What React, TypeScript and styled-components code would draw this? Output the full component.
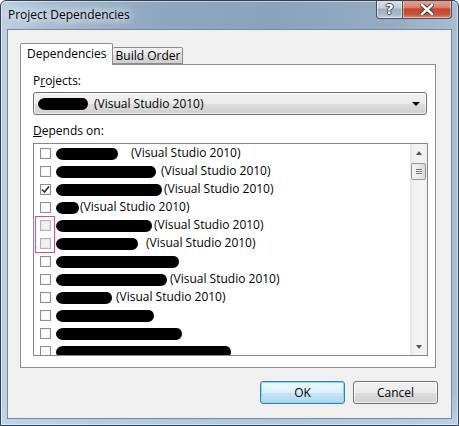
import React from 'react';
import styled, {createGlobalStyle} from 'styled-components';

const GlobalStyle = createGlobalStyle`
	html, body {
		margin: 0;
		padding: 0;
		background: #ffffff;
	}
	body {
		font-family: "Open Sans", "Noto Sans", sans-serif;
		font-size: 12px;
		color: #000;
	}
`;

const Window = styled.div`
	width: 459px;
	height: 426px;
	box-sizing: border-box;
	display: flex;
	flex-direction: column;
	border: 1px solid #37424f;
	border-radius: 6px 6px 0 0;
	padding: 0 6px 6px 6px;
	background:
		linear-gradient(180deg, rgba(255, 255, 255, 0) 92%, rgba(190, 215, 240, 0.8) 100%),
		linear-gradient(90deg, #bdd0e4 0%, #a4b9cf 12%, #8ea6c0 35%, #8aa2bc 60%, #94abc3 85%, #a9bdd2 100%);
	box-shadow: inset 0 0 0 1px rgba(255, 255, 255, 0.45);
	overflow: hidden;
`;

const TitleBar = styled.div`
	height: 28px;
	display: flex;
	align-items: flex-start;
	justify-content: space-between;
`;

const Title = styled.div`
	padding: 6px 0 0 1px;
	font-size: 12px;
	line-height: 16px;
	color: #000;
	text-shadow: 0 0 6px #e8eef5, 0 0 10px #e8eef5, 0 0 14px #e8eef5;
`;

const CaptionButtons = styled.div`
	display: flex;
	margin-top: -1px;
`;

const CaptionButton = styled.div<{$close?: boolean}>`
	width: ${p => (p.$close ? 49 : 27)}px;
	height: 19px;
	box-sizing: border-box;
	display: flex;
	align-items: center;
	justify-content: center;
	border: 1px solid #48525e;
	border-top: none;
	border-radius: ${p => (p.$close ? '0 0 4px 0' : '0 0 0 4px')};
	border-left: ${p => (p.$close ? 'none' : '1px solid #48525e')};
	background: ${p =>
		p.$close
			? 'linear-gradient(180deg, #e8a493 0%, #d88770 40%, #c6452f 50%, #c9533d 80%, #dc8e78 100%)'
			: 'linear-gradient(180deg, #dbe3ec 0%, #c3cfdb 45%, #9fb0c2 50%, #a9b9c9 80%, #c8d4e0 100%)'};
	box-shadow: inset 0 0 0 1px rgba(255, 255, 255, 0.45);
	color: #fff;
	font-family: "DejaVu Sans", sans-serif;
	font-weight: bold;
	font-size: 14px;
	text-shadow: -1px 0 #3b4550, 1px 0 #3b4550, 0 -1px #3b4550, 0 1px #3b4550;
`;

const Client = styled.div`
	flex: 1;
	display: flex;
	flex-direction: column;
	background: #f0f0f0;
	border: 1px solid #7a8899;
	padding: 13px 13px 0 12px;
`;

const TabStrip = styled.div`
	height: 21px;
	display: flex;
	align-items: flex-end;
	position: relative;
	z-index: 1;
`;

const Tab = styled.div<{$active?: boolean}>`
	box-sizing: border-box;
	height: ${p => (p.$active ? 22 : 17)}px;
	margin-bottom: ${p => (p.$active ? -1 : 0)}px;
	padding: ${p => (p.$active ? '2px 5px 0 6px' : '0 2px 0 3px')};
	border: 1px solid #898c95;
	border-bottom: ${p => (p.$active ? 'none' : '1px solid #898c95')};
	border-left: ${p => (p.$active ? '1px solid #898c95' : 'none')};
	border-radius: 2px 2px 0 0;
	background: ${p =>
		p.$active ? '#ffffff' : 'linear-gradient(180deg, #f2f2f2 0%, #ebebeb 50%, #dddddd 50%, #cfcfcf 100%)'};
	line-height: 16px;
	white-space: nowrap;
`;

const TabPanel = styled.div`
	height: 304px;
	box-sizing: border-box;
	margin-right: 2px;
	display: flex;
	flex-direction: column;
	background: #ffffff;
	border: 1px solid #898c95;
	padding: 8px 8px 0 12px;
`;

const FieldLabel = styled.div`
	line-height: 16px;
	& u {
		text-decoration: underline;
	}
`;

const Combo = styled.div`
	height: 23px;
	box-sizing: border-box;
	margin-top: 3px;
	display: flex;
	align-items: center;
	padding: 0 6px 0 4px;
	border: 1px solid #707070;
	border-radius: 3px;
	background: linear-gradient(180deg, #f2f2f2 0%, #ebebeb 50%, #dddddd 50%, #cfcfcf 100%);
	box-shadow: inset 0 0 0 1px rgba(255, 255, 255, 0.6);
`;

const ComboText = styled.div`
	flex: 1;
	display: flex;
	align-items: center;
	white-space: nowrap;
`;

const DropArrow = styled.div`
	width: 0;
	height: 0;
	border-left: 4px solid transparent;
	border-right: 4px solid transparent;
	border-top: 4px solid #000;
`;

const DependsLabel = styled(FieldLabel)`
	margin-top: 8px;
`;

const ListBox = styled.div`
	margin-top: 4px;
	margin-right: -1px;
	height: 213px;
	box-sizing: border-box;
	display: flex;
	border: 1px solid #828790;
	background: #ffffff;
`;

const Rows = styled.div`
	flex: 1;
	position: relative;
	overflow: hidden;
`;

const Row = styled.div`
	height: 18px;
	display: flex;
	align-items: center;
	padding-left: 6px;
	white-space: nowrap;
`;

const Check = styled.div<{$dim?: boolean}>`
	width: 11px;
	height: 11px;
	box-sizing: border-box;
	flex: none;
	display: flex;
	align-items: center;
	justify-content: center;
	margin-right: 5px;
	border: 1px solid ${p => (p.$dim ? '#b4b4b4' : '#8e8f8f')};
	background: ${p => (p.$dim ? '#f0f0f0' : '#ffffff')};
	box-shadow: inset 0 0 0 1px ${p => (p.$dim ? '#e6e6e6' : '#f4f4f4')};
`;

const Redaction = styled.span`
	display: inline-block;
	height: 12px;
	flex: none;
	background: #000;
	border-radius: 7px 5px 6px 7px / 6px 6px 6px 6px;
	margin-top: 1px;
`;

const Suffix = styled.span`
	line-height: 16px;
`;

const FocusMark = styled.div`
	position: absolute;
	left: 1px;
	top: 72px;
	width: 20px;
	height: 37px;
	box-sizing: border-box;
	border: 1px solid #e2448f;
`;

const ScrollBar = styled.div`
	width: 17px;
	display: flex;
	flex-direction: column;
	background: linear-gradient(90deg, #e3e3e3 0%, #f0f0f0 20%, #f4f4f4 80%, #ebebeb 100%);
`;

const ArrowButton = styled.div`
	height: 17px;
	display: flex;
	align-items: center;
	justify-content: center;
`;

const ArrowUp = styled.div`
	width: 0;
	height: 0;
	border-left: 3px solid transparent;
	border-right: 3px solid transparent;
	border-bottom: 4px solid #545454;
`;

const ArrowDown = styled(ArrowUp)`
	border-bottom: none;
	border-top: 4px solid #545454;
`;

const Track = styled.div`
	flex: 1;
	padding-top: 2px;
`;

const Thumb = styled.div`
	height: 17px;
	margin: 0 1px;
	box-sizing: border-box;
	display: flex;
	flex-direction: column;
	align-items: center;
	justify-content: center;
	gap: 1px;
	border: 1px solid #979797;
	border-radius: 2px;
	background: linear-gradient(90deg, #f5f5f5 0%, #e9e9e9 50%, #d9d9d9 100%);
`;

const Grip = styled.div`
	width: 6px;
	height: 1px;
	background: #6f6f6f;
	box-shadow: 0 1px #ffffff;
`;

const ButtonRow = styled.div`
	margin-top: 13px;
	display: flex;
	justify-content: flex-end;
	gap: 8px;
`;

const DialogButton = styled.div<{$default?: boolean}>`
	width: 85px;
	height: 23px;
	box-sizing: border-box;
	display: flex;
	align-items: center;
	justify-content: center;
	border: 1px solid ${p => (p.$default ? '#3c7fb1' : '#707070')};
	border-radius: 3px;
	background: ${p =>
		p.$default
			? 'linear-gradient(180deg, #edf8fe 0%, #dcf1fc 50%, #c4e6f9 50%, #aed8f2 100%)'
			: 'linear-gradient(180deg, #f2f2f2 0%, #ebebeb 50%, #dddddd 50%, #cfcfcf 100%)'};
	box-shadow: inset 0 0 0 1px ${p => (p.$default ? '#8fd2f6' : 'rgba(255, 255, 255, 0.7)')};
	line-height: 16px;
`;

type Dep = {w: number; gap: number; suffix?: string; checked?: boolean; dim?: boolean};

const deps: Dep[] = [
	{w: 62, gap: 13, suffix: '(Visual Studio 2010)'},
	{w: 100, gap: 5, suffix: '(Visual Studio 2010)'},
	{w: 106, gap: 2, suffix: '(Visual Studio 2010)', checked: true},
	{w: 23, gap: 1, suffix: '(Visual Studio 2010)'},
	{w: 96, gap: 2, suffix: '(Visual Studio 2010)', dim: true},
	{w: 82, gap: 8, suffix: '(Visual Studio 2010)', dim: true},
	{w: 123, gap: 0},
	{w: 111, gap: 3, suffix: '(Visual Studio 2010)'},
	{w: 56, gap: 4, suffix: '(Visual Studio 2010)'},
	{w: 98, gap: 0},
	{w: 126, gap: 0},
	{w: 175, gap: 0},
];

const CheckMark = () => (
	<svg width="9" height="9" viewBox="0 0 9 9">
		<path d="M1 4.5 L3.5 7 L8 1.5" fill="none" stroke="#2a2a2a" strokeWidth="1.6" />
	</svg>
);

const CloseGlyph = () => (
	<svg width="14" height="11" viewBox="0 0 14 11">
		<path
			d="M2 1 L12 10 M12 1 L2 10"
			stroke="#3b4550"
			strokeWidth="4.4"
			strokeLinecap="square"
		/>
		<path d="M2 1 L12 10 M12 1 L2 10" stroke="#ffffff" strokeWidth="2.4" strokeLinecap="square" />
	</svg>
);

export default function App() {
	return (
		<>
			<GlobalStyle />
			<Window>
				<TitleBar>
					<Title>Project Dependencies</Title>
					<CaptionButtons>
						<CaptionButton>?</CaptionButton>
						<CaptionButton $close>
							<CloseGlyph />
						</CaptionButton>
					</CaptionButtons>
				</TitleBar>
				<Client>
					<TabStrip>
						<Tab $active>Dependencies</Tab>
						<Tab>Build Order</Tab>
					</TabStrip>
					<TabPanel>
						<FieldLabel>
							P<u>r</u>ojects:
						</FieldLabel>
						<Combo>
							<ComboText>
								<Redaction style={{width: 50}} />
								<Suffix style={{marginLeft: 6}}>(Visual Studio 2010)</Suffix>
							</ComboText>
							<DropArrow />
						</Combo>
						<DependsLabel>
							<u>D</u>epends on:
						</DependsLabel>
						<ListBox>
							<Rows>
								{deps.map((d, i) => (
									<Row key={i}>
										<Check $dim={d.dim}>{d.checked && <CheckMark />}</Check>
										<Redaction style={{width: d.w}} />
										{d.suffix && <Suffix style={{marginLeft: d.gap}}>{d.suffix}</Suffix>}
									</Row>
								))}
								<FocusMark />
							</Rows>
							<ScrollBar>
								<ArrowButton>
									<ArrowUp />
								</ArrowButton>
								<Track>
									<Thumb>
										<Grip />
										<Grip />
										<Grip />
									</Thumb>
								</Track>
								<ArrowButton>
									<ArrowDown />
								</ArrowButton>
							</ScrollBar>
						</ListBox>
					</TabPanel>
					<ButtonRow>
						<DialogButton $default>OK</DialogButton>
						<DialogButton>Cancel</DialogButton>
					</ButtonRow>
				</Client>
			</Window>
		</>
	);
}
